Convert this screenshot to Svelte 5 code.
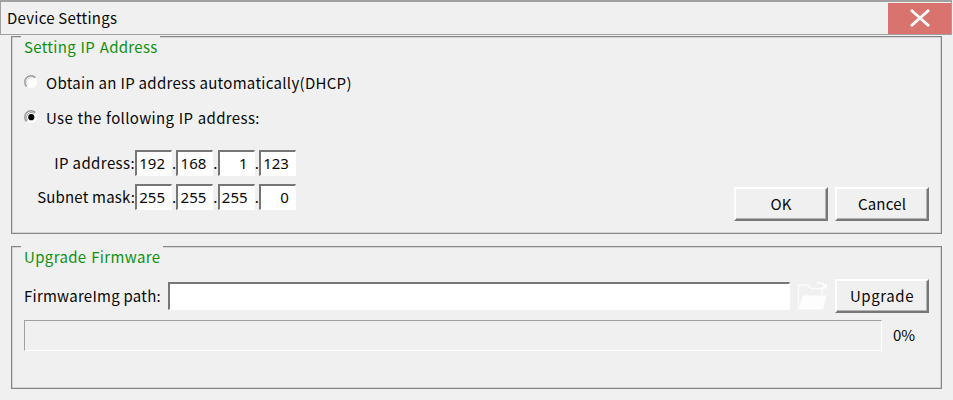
<script>
  let mode = $state('static');
  let path = $state('');
  const rows = [
    { label: 'IP address:', name: 'ip', octets: ['192', '168', '1', '123'] },
    { label: 'Subnet mask:', name: 'mask', octets: ['255', '255', '255', '0'] }
  ];
  const options = [
    { value: 'dhcp', label: 'Obtain an IP address automatically(DHCP)' },
    { value: 'static', label: 'Use the following IP address:' }
  ];
</script>

<div class="window">
  <header>
    <span class="title">Device Settings</span>
    <button class="close" aria-label="Close">
      <svg width="20" height="18" viewBox="0 0 20 18"><path d="M1 1 L19 17 M19 1 L1 17" stroke="#fff" stroke-width="2.8" fill="none" /></svg>
    </button>
  </header>

  <section class="group network">
    <h2 class="l1"><span>Setting IP Address</span></h2>
    <div class="options">
      {#each options as o}
        <label class={o.value}>
          <svg class="radio" width="14" height="14" viewBox="0 0 14 14">
            <circle cx="7" cy="7" r="6.2" fill="#fff" />
            <path d="M2.6 11.4 A6.2 6.2 0 0 1 11.4 2.6" fill="none" stroke="#9b9b9b" stroke-width="1.5" />
            <path d="M3.4 10.4 A5 5 0 0 1 10.4 3.4" fill="none" stroke={o.value === mode ? '#777' : '#c8c8c8'} stroke-width=".7" />
            {#if o.value === mode}<circle cx="7.3" cy="7.2" r="3.1" fill="#000" />{/if}
          </svg>
          <input type="radio" name="mode" value={o.value} bind:group={mode} />
          <span>{o.label}</span>
        </label>
      {/each}
    </div>
    <div class="bottom">
      <div class="addresses">
        {#each rows as row}
          <div class="row">
            <span class="name {row.name}">{row.label}</span>
            {#each row.octets as n, i}
              {#if i}<span class="dot">.</span>{/if}
              <span class="octet">{n}</span>
            {/each}
          </div>
        {/each}
      </div>
      <div class="actions">
        <button class="btn">OK</button>
        <button class="btn">Cancel</button>
      </div>
    </div>
  </section>

  <section class="group firmware">
    <h2 class="l2"><span>Upgrade Firmware</span></h2>
    <div class="file">
      <span class="pathlabel">FirmwareImg path:</span>
      <input class="path" aria-label="Firmware image path" bind:value={path} />
      <svg class="folder" width="32" height="30" viewBox="0 0 32 30">
        <path d="M1.5 28 V4 H11 L13.5 7.5 H25 V13.5" fill="none" stroke="#fcfcfc" stroke-width="1.4" />
        <path d="M6 14.5 H29.5 L26 28.5 H1.5 Z" fill="#fdfdfd" />
        <path d="M19.5 2 Q25 .5 28 5" fill="none" stroke="#fcfcfc" stroke-width="1.5" />
        <path d="M30 2 V7.5 H24 Z" fill="#fcfcfc" />
      </svg>
      <button class="btn">Upgrade</button>
    </div>
    <div class="progress">
      <div class="bar"></div>
      <span>0%</span>
    </div>
  </section>
</div>

<style>
  :global(body) { background: #f0f0f0; overflow: hidden; }
  .window, .window * { box-sizing: border-box; }
  .window {
    width: 953px; height: 400px; background: #f0f0f0; color: #080808;
    font: 15px/20px "Noto Sans CJK SC", "Noto Sans", sans-serif;
    white-space: nowrap;
  }
  button, input { font: inherit; color: inherit; padding: 0; margin: 0; }
  header {
    display: flex; justify-content: space-between; width: 952px; height: 35px;
    border: 1px solid #a0a0a0; border-top-width: 2px;
  }
  .title { padding: 6px 0 0 6px; letter-spacing: .25px; }
  .close {
    width: 63px; height: 31px; border: 0; background: #d9736e;
    margin-top: 1px; padding-bottom: 2px; display: flex; align-items: center; justify-content: center;
  }
  .group {
    margin-left: 11px; width: 931px; border: 1px solid #868686;
    box-shadow: inset 0 0 0 .5px #b8b8b8;
  }
  .network { margin-top: 1px; height: 198px; }
  .firmware { margin-top: 12px; height: 143px; }
  h2 {
    position: relative; top: -2px; margin: 0 0 0 9px; height: 23px; padding: 2px 0 0 3px;
    background: #f0f0f0; color: #109010; font-size: 15px; font-weight: 400; line-height: 20px;
  }
  .l1 { width: 139px; letter-spacing: .3px; word-spacing: 1px; }
  .l2 { width: 142px; letter-spacing: .35px; word-spacing: 1px; }
  .options { padding: 4px 0 0 12px; }
  label { display: flex; align-items: center; height: 35px; letter-spacing: .3px; }
  .static { letter-spacing: .35px; word-spacing: .7px; }
  label input { display: none; }
  label > span { margin-left: 8px; padding-top: 2px; }
  .radio { display: block; }
  .bottom { display: flex; justify-content: space-between; }
  .addresses { padding-top: 16px; }
  .row { display: flex; height: 34px; }
  .name { width: 123px; text-align: right; padding-top: 3px; letter-spacing: .4px; }
  .mask { letter-spacing: .18px; }
  .octet {
    width: 37px; height: 26px; background: #fff; text-align: right; padding: 1px 6px 0 0;
    border: solid; border-width: 2px 1px 1px 2px; border-color: #767676 #fff #fff #767676;
    font-family: "Noto Sans", sans-serif;
  }
  .dot { width: 4.3px; padding-top: 3px; text-align: center; }
  .actions { display: flex; gap: 7px; padding: 53px 12px 0 0; }
  .btn {
    width: 94px; height: 34px; background: #f0f0f0; border: 2px solid;
    border-color: #fff #777 #777 #fff; letter-spacing: .2px;
    box-shadow: inset -1px -1px #b4b4b4;
  }
  .file { display: flex; padding: 9px 0 0 12px; }
  .pathlabel { width: 144px; padding-top: 7px; letter-spacing: .25px; }
  .file .btn { letter-spacing: .6px; }
  .path {
    width: 622px; height: 28px; margin-top: 3px; background: #fff; border: solid;
    border-width: 2px 1px 1px 2px; border-color: #767676 #fff #fff #767676; outline: 0;
  }
  .folder { display: block; margin: 2px 6px 0 7px; }
  .progress { display: flex; padding: 7px 0 0 12px; }
  .bar { width: 858px; height: 31px; border: 1px solid; border-color: #a0a0a0 #fff #fff #a0a0a0; }
  .progress span { margin-left: 11px; padding-top: 5px; }
</style>
